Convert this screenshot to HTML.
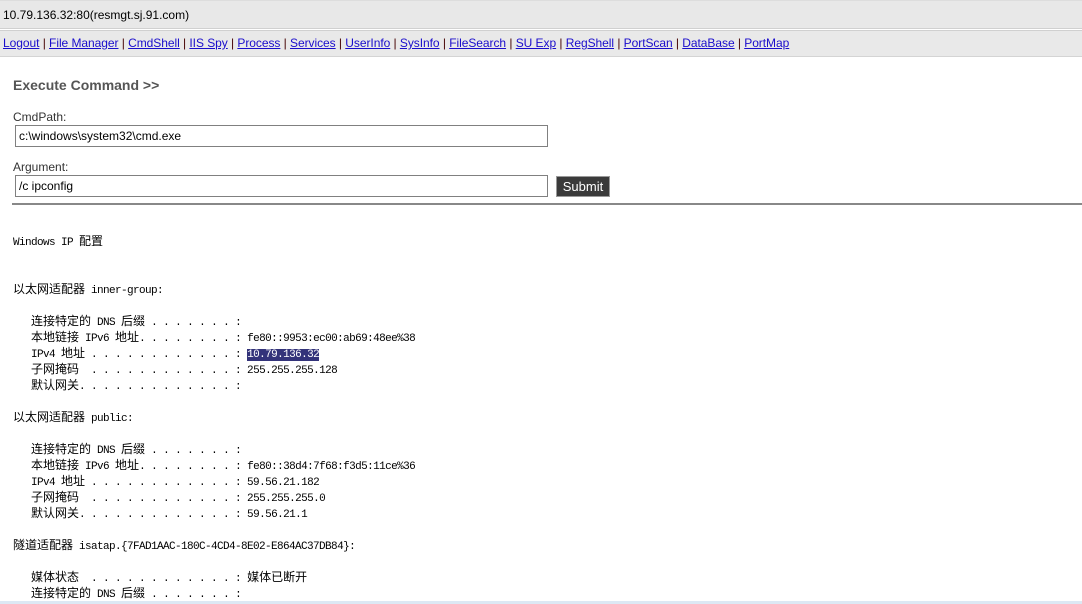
<!DOCTYPE html>
<html><head><meta charset="utf-8"><style>
body{margin:0;width:1082px;height:604px;overflow:hidden;background:#fff;font-family:"Liberation Sans",Arial,sans-serif;font-size:12px;color:#000;position:relative}
.top{position:absolute;left:0;top:0;width:1082px;height:29px;background:#e8e8e8;border-bottom:1px solid #d0d0d0;border-top:1px solid #ddd;box-sizing:border-box;line-height:28px;padding-left:3px;font-size:12px}
.nav{position:absolute;left:0;top:30px;width:1082px;height:27px;background:#e9e9e9;border-bottom:1px solid #d4d4d4;border-top:1px solid #d0d0d0;box-sizing:border-box;line-height:25px;padding-left:3px;color:#400;font-size:12px;letter-spacing:-0.05px}
.nav a{color:#1a0dcc;text-decoration:underline}
h2{position:absolute;left:13px;top:77px;margin:0;font-size:14px;font-weight:bold;color:#555}
.lbl{position:absolute;left:13px;color:#333}
.inp{position:absolute;left:15px;width:533px;height:22px;border:1px solid #808080;box-sizing:border-box;line-height:20px;padding-left:3px;color:#000}
.btn{position:absolute;left:556px;top:176px;width:54px;height:21px;background:#3a3a3a;border:1px solid #999;box-sizing:border-box;color:#fff;font-size:13px;text-align:center;line-height:19px}
.hr{position:absolute;left:12px;top:203px;width:1070px;height:2px;background:#888}
.pre{position:absolute;left:13px;top:233px;font:11px/16px "Liberation Mono",monospace;letter-spacing:-0.6px;color:#000}
.pre div{height:16px;white-space:pre;overflow:visible}
.c{font-family:"Noto Sans CJK SC","WenQuanYi Zen Hei",sans-serif;font-size:12px;letter-spacing:0;line-height:16px}
.sel{background:#33337a;color:#fff}
.bot{position:absolute;left:0;top:601px;width:1082px;height:3px;background:#dde8f4}
</style></head><body>
<div class="top">10.79.136.32:80(resmgt.sj.91.com)</div>
<div class="nav"><a>Logout</a> | <a>File Manager</a> | <a>CmdShell</a> | <a>IIS Spy</a> | <a>Process</a> | <a>Services</a> | <a>UserInfo</a> | <a>SysInfo</a> | <a>FileSearch</a> | <a>SU Exp</a> | <a>RegShell</a> | <a>PortScan</a> | <a>DataBase</a> | <a>PortMap</a></div>
<h2>Execute Command &gt;&gt;</h2>
<div class="lbl" style="top:110px">CmdPath:</div>
<div class="inp" style="top:125px">c:\windows\system32\cmd.exe</div>
<div class="lbl" style="top:160px">Argument:</div>
<div class="inp" style="top:175px">/c ipconfig</div>
<div class="btn">Submit</div>
<div class="hr"></div>
<div class="pre">
<div>Windows IP <span class="c">配置</span></div>
<div></div>
<div></div>
<div><span class="c">以太网适配器</span> inner-group:</div>
<div></div>
<div>   <span class="c">连接特定的</span> DNS <span class="c">后缀</span> . . . . . . . :</div>
<div>   <span class="c">本地链接</span> IPv6 <span class="c">地址</span>. . . . . . . . : fe80::9953:ec00:ab69:48ee%38</div>
<div>   IPv4 <span class="c">地址</span> . . . . . . . . . . . . : <span class="sel">10.79.136.32</span></div>
<div>   <span class="c">子网掩码</span>  . . . . . . . . . . . . : 255.255.255.128</div>
<div>   <span class="c">默认网关</span>. . . . . . . . . . . . . :</div>
<div></div>
<div><span class="c">以太网适配器</span> public:</div>
<div></div>
<div>   <span class="c">连接特定的</span> DNS <span class="c">后缀</span> . . . . . . . :</div>
<div>   <span class="c">本地链接</span> IPv6 <span class="c">地址</span>. . . . . . . . : fe80::38d4:7f68:f3d5:11ce%36</div>
<div>   IPv4 <span class="c">地址</span> . . . . . . . . . . . . : 59.56.21.182</div>
<div>   <span class="c">子网掩码</span>  . . . . . . . . . . . . : 255.255.255.0</div>
<div>   <span class="c">默认网关</span>. . . . . . . . . . . . . : 59.56.21.1</div>
<div></div>
<div><span class="c">隧道适配器</span> isatap.{7FAD1AAC-180C-4CD4-8E02-E864AC37DB84}:</div>
<div></div>
<div>   <span class="c">媒体状态</span>  . . . . . . . . . . . . : <span class="c">媒体已断开</span></div>
<div>   <span class="c">连接特定的</span> DNS <span class="c">后缀</span> . . . . . . . :</div>
</div>
<div class="bot"></div>
</body></html>
